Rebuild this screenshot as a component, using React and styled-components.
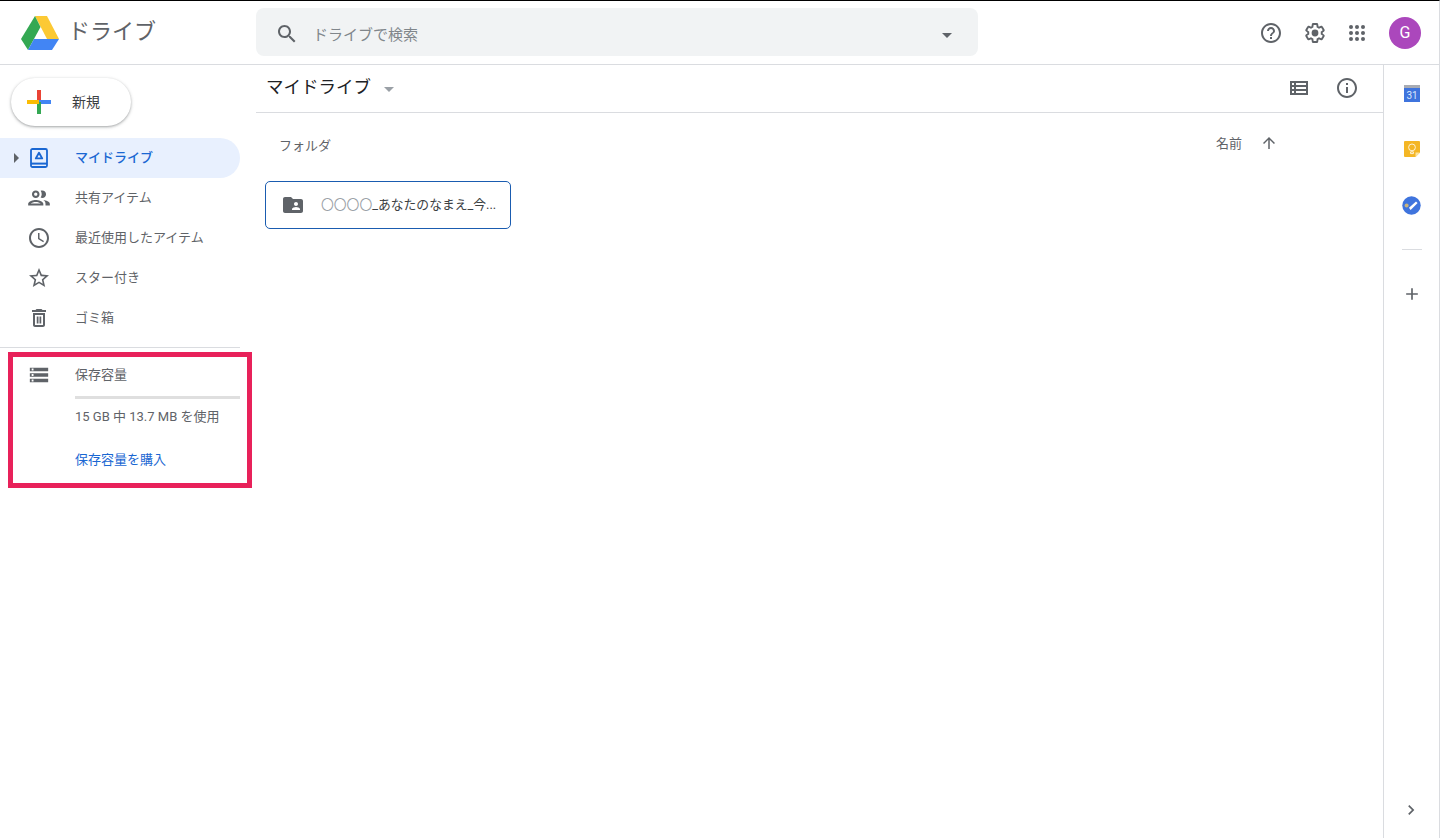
import React from "react";
import styled, { createGlobalStyle } from "styled-components";

const Global = createGlobalStyle`
  html, body { margin: 0; padding: 0; background: #fff; }
  body { font-family: Roboto, "Noto Sans CJK JP", sans-serif; color: #5f6368; }
  * { box-sizing: border-box; }
`;

const Page = styled.div`
  position: relative;
  width: 1440px;
  height: 838px;
  overflow: hidden;
  display: flex;
  flex-direction: column;
  border-top: 1px solid #000;
  border-right: 1px solid #dadce0;
`;

const Header = styled.header`
  height: 64px;
  flex: none;
  display: flex;
  align-items: center;
  border-bottom: 1px solid #dadce0;
`;
const Brand = styled.div`
  width: 256px;
  flex: none;
  display: flex;
  align-items: center;
  gap: 9px;
  padding-left: 21px;
`;
const BrandName = styled.span`
  font-size: 22px;
  color: #5f6368;
  line-height: 32px;
  margin-top: -2px;
`;
const Search = styled.div`
  width: 722px;
  height: 48px;
  margin-bottom: 1px;
  border-radius: 8px;
  background: #f1f3f4;
  display: flex;
  align-items: center;
  padding: 2px 26px 0 19px;
  gap: 14px;
`;
const SearchGlyph = styled.div`
  margin-top: 2px;
`;
const SearchText = styled.span`
  flex: 1;
  font-size: 15px;
  color: #80868b;
`;
const SearchCaret = styled.span`
  width: 0;
  height: 0;
  margin-top: 4px;
  border-top: 5px solid #5f6368;
  border-left: 5px solid transparent;
  border-right: 5px solid transparent;
`;
const HeaderActions = styled.div`
  margin-left: auto;
  display: flex;
  align-items: center;
  padding-right: 18px;
`;
const HeaderButton = styled.div`
  width: ${(p) => p.$w}px;
  display: flex;
  justify-content: center;
  color: #5f6368;
`;
const Avatar = styled.div`
  width: 32px;
  height: 32px;
  margin-left: 12px;
  border-radius: 50%;
  background: #ab47bc;
  color: #fff;
  font-size: 16px;
  font-weight: 400;
  display: flex;
  align-items: center;
  justify-content: center;
`;

const Body = styled.div`
  flex: 1;
  display: flex;
  min-height: 0;
`;

const Sidebar = styled.aside`
  width: 256px;
  flex: none;
  padding-top: 13px;
`;
const NewButton = styled.div`
  width: 120px;
  height: 48px;
  margin-left: 11px;
  border-radius: 24px;
  background: #fff;
  box-shadow: 0 1px 2px rgba(60, 64, 67, 0.3), 0 1px 3px 1px rgba(60, 64, 67, 0.15);
  display: flex;
  align-items: center;
  padding-left: 16px;
  gap: 21px;
  font-size: 14px;
  color: #3c4043;
`;
const NewLabel = styled.span`
  margin-top: -3px;
`;
const Nav = styled.nav`
  margin-top: 12px;
  width: 240px;
  display: flex;
  flex-direction: column;
`;
const NavRow = styled.div`
  position: relative;
  height: 40px;
  display: flex;
  align-items: center;
  border-radius: 0 20px 20px 0;
  background: ${(p) => (p.$active ? "#e8f0fe" : "transparent")};
  color: ${(p) => (p.$active ? "#1a67d2" : "#5f6368")};
  font-weight: ${(p) => (p.$active ? 500 : 400)};
  font-size: 13px;
`;
const NavLabel = styled.span`
  margin-top: -4px;
`;
const NavCaret = styled.span`
  position: absolute;
  left: 14px;
  top: 15px;
  width: 0;
  height: 0;
  border-left: 5px solid #5f6368;
  border-top: 5px solid transparent;
  border-bottom: 5px solid transparent;
`;
const NavIcon = styled.div`
  width: 75px;
  flex: none;
  display: flex;
  justify-content: center;
  padding-left: 3px;
  color: inherit;
`;
const Divider = styled.hr`
  width: 240px;
  height: 1px;
  margin: 9px 0 0;
  border: 0;
  background: #dadce0;
`;
const Storage = styled.section`
  width: 240px;
  padding-top: 16px;
  display: grid;
  grid-template-columns: 75px 1fr;
  font-size: 13px;
  color: #5f6368;
`;
const StorageIcon = styled.div`
  display: flex;
  justify-content: center;
  padding-left: 3px;
  height: 22px;
  align-items: center;
`;
const StorageColumn = styled.div`
  display: flex;
  flex-direction: column;
`;
const StorageTitle = styled.div`
  line-height: 22px;
`;
const StorageBar = styled.div`
  margin-top: 10px;
  height: 3px;
  background: #dfdfdf;
`;
const StorageUse = styled.div`
  margin-top: 9px;
  line-height: 18px;
`;
const StorageLink = styled.div`
  margin-top: 25px;
  line-height: 18px;
  color: #1a67d2;
`;
const Annotation = styled.div`
  position: absolute;
  left: 8px;
  top: 351px;
  width: 244px;
  height: 136px;
  border: 5px solid #e8215a;
  pointer-events: none;
`;

const Main = styled.main`
  flex: 1;
  min-width: 0;
  display: flex;
  flex-direction: column;
`;
const MainBar = styled.div`
  height: 48px;
  flex: none;
  display: flex;
  align-items: center;
  border-bottom: 1px solid #dadce0;
  padding: 0 24px 2px 10px;
`;
const MainTitle = styled.h1`
  margin: -4px 0 0 0;
  font-size: 17.5px;
  font-weight: 400;
  color: #202124;
`;
const TitleCaret = styled.span`
  width: 0;
  height: 0;
  margin: 4px 0 0 13px;
  border-top: 5px solid #9aa0a6;
  border-left: 5px solid transparent;
  border-right: 5px solid transparent;
`;
const MainActions = styled.div`
  margin-left: auto;
  display: flex;
  align-items: center;
  gap: 27px;
  color: #5f6368;
`;
const Content = styled.div`
  flex: 1;
  padding: 0 9px;
`;
const SectionHead = styled.div`
  height: 68px;
  display: flex;
  align-items: center;
  padding: 0 0 5px 14px;
  font-size: 13px;
  color: #5f6368;
`;
const SortGroup = styled.div`
  margin-left: auto;
  margin-right: 96px;
  display: flex;
  align-items: center;
  gap: 18px;
  margin-top: -4px;
`;
const FolderCard = styled.div`
  width: 246px;
  height: 48px;
  border: 1px solid #1a5cb0;
  border-radius: 5px;
  display: flex;
  align-items: center;
  padding-left: 15px;
  gap: 16px;
  color: #5f6368;
`;
const FolderName = styled.span`
  font-size: 12.8px;
  color: #3c4043;
  white-space: nowrap;
  margin-top: -3px;
`;
const FolderMark = styled.span`
  color: #9aa0a6;
`;

const Rail = styled.aside`
  width: 56px;
  flex: none;
  border-left: 1px solid #dadce0;
  display: flex;
  flex-direction: column;
  align-items: center;
  color: #5f6368;
`;
const RailButton = styled.div`
  width: 100%;
  height: 56px;
  flex: none;
  display: flex;
  align-items: center;
  justify-content: center;
  ${(p) => p.$bottom && "margin-top: auto; padding-right: 2px;"}
`;
const RailRule = styled.div`
  width: 20px;
  height: 1px;
  margin: 16px 0 16px;
  background: #dadce0;
`;

const Icon = ({ d, size = 24, children }) => (
  <svg width={size} height={size} viewBox="0 0 24 24" fill="currentColor" style={{ display: "block" }}>
    {d && <path d={d} />}
    {children}
  </svg>
);

const P = {
  search: "M15.5 14h-.79l-.28-.27C15.41 12.59 16 11.11 16 9.5 16 5.91 13.09 3 9.5 3S3 5.91 3 9.5 5.91 16 9.5 16c1.61 0 3.09-.59 4.23-1.57l.27.28v.79l5 4.99L20.49 19l-4.99-5zm-6 0C7.01 14 5 11.99 5 9.5S7.01 5 9.5 5 14 7.01 14 9.5 11.99 14 9.5 14z",
  help: "M11 18h2v-2h-2v2zm1-16C6.48 2 2 6.48 2 12s4.48 10 10 10 10-4.48 10-10S17.52 2 12 2zm0 18c-4.41 0-8-3.59-8-8s3.59-8 8-8 8 3.59 8 8-3.59 8-8 8zm0-14c-2.21 0-4 1.79-4 4h2c0-1.1.9-2 2-2s2 .9 2 2c0 2-3 1.75-3 5h2c0-2.25 3-2.5 3-5 0-2.21-1.79-4-4-4z",
  gear: "M19.43 12.98c.04-.32.07-.64.07-.98s-.03-.66-.07-.98l2.11-1.65c.19-.15.24-.42.12-.64l-2-3.46c-.12-.22-.39-.3-.61-.22l-2.49 1c-.52-.4-1.08-.73-1.69-.98l-.38-2.65C14.46 2.18 14.25 2 14 2h-4c-.25 0-.46.18-.49.42l-.38 2.65c-.61.25-1.17.59-1.69.98l-2.49-1c-.23-.09-.49 0-.61.22l-2 3.46c-.13.22-.07.49.12.64l2.11 1.65c-.04.32-.07.65-.07.98s.03.66.07.98l-2.11 1.65c-.19.15-.24.42-.12.64l2 3.46c.12.22.39.3.61.22l2.49-1c.52.4 1.08.73 1.69.98l.38 2.65c.03.24.24.42.49.42h4c.25 0 .46-.18.49-.42l.38-2.65c.61-.25 1.17-.59 1.69-.98l2.49 1c.23.09.49 0 .61-.22l2-3.46c.12-.22.07-.49-.12-.64l-2.11-1.65z",
  info: "M11 7h2v2h-2zm0 4h2v6h-2zm1-9C6.48 2 2 6.48 2 12s4.48 10 10 10 10-4.48 10-10S17.52 2 12 2zm0 18c-4.41 0-8-3.59-8-8s3.59-8 8-8 8 3.59 8 8-3.59 8-8 8z",
  people: "M9 13.75c-2.34 0-7 1.17-7 3.5V19h14v-1.75c0-2.33-4.66-3.5-7-3.5zM4.34 17c.84-.58 2.87-1.25 4.66-1.25s3.82.67 4.66 1.25H4.34zM9 12c1.93 0 3.5-1.57 3.5-3.5S10.93 5 9 5 5.5 6.57 5.5 8.5 7.07 12 9 12zm0-5c.83 0 1.5.67 1.5 1.5S9.83 10 9 10s-1.5-.67-1.5-1.5S8.17 7 9 7zm7.04 6.81c1.16.84 1.96 1.96 1.96 3.44V19h4v-1.75c0-2.02-3.5-3.17-5.96-3.44zM15 12c1.93 0 3.5-1.57 3.5-3.5S16.93 5 15 5c-.54 0-1.04.13-1.5.35.63.89 1 1.98 1 3.15s-.37 2.26-1 3.15c.46.22.96.35 1.5.35z",
  clock: "M11.99 2C6.47 2 2 6.48 2 12s4.47 10 9.99 10C17.52 22 22 17.52 22 12S17.52 2 11.99 2zM12 20c-4.42 0-8-3.58-8-8s3.58-8 8-8 8 3.58 8 8-3.58 8-8 8zm.5-13H11v6l5.25 3.15.75-1.23-4.5-2.67z",
  star: "M22 9.24l-7.19-.62L12 2 9.19 8.63 2 9.24l5.46 4.73L5.82 21 12 17.27 18.18 21l-1.63-7.03L22 9.24zM12 15.4l-3.76 2.27 1-4.28-3.32-2.88 4.38-.38L12 6.1l1.71 4.04 4.38.38-3.32 2.88 1 4.28L12 15.4z",
  trash: "M6 19c0 1.1.9 2 2 2h8c1.1 0 2-.9 2-2V7H6v12zM8 9h8v10H8V9zm7.5-5l-1-1h-5l-1 1H5v2h14V4zM9.75 10.5h1.75v7H9.75zm2.75 0h1.75v7H12.5z",
  storage: "M2 20h20v-4H2v4zm2-3h2v2H4v-2zM2 4v4h20V4H2zm4 3H4V5h2v2zm-4 7h20v-4H2v4zm2-3h2v2H4v-2z",
  up: "M4 12l1.41 1.41L11 7.83V20h2V7.83l5.58 5.59L20 12l-8-8-8 8z",
  plus: "M19 13h-6v6h-2v-6H5v-2h6V5h2v6h6v2z",
  chevron: "M10 6L8.59 7.41 13.17 12l-4.58 4.59L10 18l6-6z",
  folder: "M20 6h-8l-2-2H4c-1.1 0-1.99.9-1.99 2L2 18c0 1.1.9 2 2 2h16c1.1 0 2-.9 2-2V8c0-1.1-.9-2-2-2zm-5 3c1.1 0 2 .9 2 2s-.9 2-2 2-2-.9-2-2 .9-2 2-2zm4 8h-8v-1c0-1.33 2.67-2 4-2s4 .67 4 2v1z",
};

const DriveLogo = () => (
  <svg width="38" height="34" viewBox="0 0 38 34" style={{ display: "block" }}>
    <polygon points="14,0 26,0 38,23 26,23" fill="#fcc934" />
    <polygon points="14,0 0,23 7,34 19.5,11" fill="#34a853" />
    <polygon points="7,34 31,34 38,23 13,23" fill="#4285f4" />
  </svg>
);

const ColorPlus = () => (
  <svg width="24" height="24" viewBox="0 0 24 24" style={{ display: "block" }}>
    <rect x="10" y="0" width="4" height="12" fill="#ea4335" />
    <rect x="12" y="10" width="12" height="4" fill="#4285f4" />
    <rect x="10" y="12" width="4" height="12" fill="#34a853" />
    <rect x="0" y="10" width="12" height="4" fill="#fbbc04" />
  </svg>
);

const MyDriveIcon = () => (
  <svg width="18" height="20" viewBox="0 0 18 20" style={{ display: "block" }}>
    <rect x="1" y="1" width="16" height="18" rx="1.5" fill="none" stroke="currentColor" strokeWidth="1.8" />
    <path d="M1 15.6h16" stroke="currentColor" strokeWidth="2" />
    <path d="M9 4.8l3.2 5.6H5.8z" fill="none" stroke="currentColor" strokeWidth="1.9" strokeLinejoin="round" />
  </svg>
);

const ListIcon = () => (
  <svg width="18" height="14" viewBox="0 0 18 14" style={{ display: "block" }}>
    <path
      fillRule="evenodd"
      fill="currentColor"
      d="M0 0h18v14H0zM2 2v2h2V2zm4 0v2h10V2zM2 6v2h2V6zm4 0v2h10V6zM2 10v2h2v-2zm4 0v2h10v-2z"
    />
  </svg>
);

const GearIcon = () => (
  <svg width="24" height="24" viewBox="0 0 24 24" style={{ display: "block" }}>
    <g transform="translate(12 12) scale(.9) translate(-12 -12)">
      <path d={P.gear} fill="none" stroke="currentColor" strokeWidth="2.1" />
    </g>
    <circle cx="12" cy="12" r="3.4" fill="currentColor" />
  </svg>
);

const AppsIcon = () => (
  <Icon>
    {[6, 12, 18].flatMap((y) =>
      [6, 12, 18].map((x) => <circle key={`${x}-${y}`} cx={x} cy={y} r="2" />)
    )}
  </Icon>
);

const CalendarIcon = () => (
  <svg width="16" height="17" viewBox="0 0 16 17" style={{ display: "block" }}>
    <rect x="0" y="0" width="16" height="5" fill="#a8abb3" />
    <rect x="0" y="3" width="16" height="14" fill="#3f74dd" />
    <text x="8" y="14" fontSize="10" fontFamily="Roboto, sans-serif" textAnchor="middle" fill="#dce7fb">31</text>
  </svg>
);

const KeepIcon = () => (
  <svg width="16" height="16" viewBox="0 0 16 16" style={{ display: "block" }}>
    <path d="M1 0h14a1 1 0 0 1 1 1v10.5L11.5 16H1a1 1 0 0 1-1-1V1a1 1 0 0 1 1-1z" fill="#f4b625" />
    <path d="M16 11.5L11.5 16v-4.5z" fill="#fbe3a0" />
    <circle cx="8" cy="6.4" r="3.4" fill="none" stroke="#fff" strokeWidth=".8" />
    <path d="M6.6 10.8h2.8v1.8H6.6z" fill="none" stroke="#fff" strokeWidth=".8" />
  </svg>
);

const TasksIcon = () => (
  <svg width="19" height="19" viewBox="0 0 19 19" style={{ display: "block" }}>
    <circle cx="9.5" cy="9.5" r="9.2" fill="#3f74dd" />
    <circle cx="4.6" cy="9.6" r="2" fill="#c7b37e" />
    <path d="M7 11.8l7-6.4 1.6 1.6-7 7z" fill="#fff" />
  </svg>
);

const navItems = [
  { label: "共有アイテム", d: P.people, size: 26 },
  { label: "最近使用したアイテム", d: P.clock, size: 24 },
  { label: "スター付き", d: P.star, size: 24 },
  { label: "ゴミ箱", d: P.trash, size: 24 },
];

export default function App() {
  return (
    <>
      <Global />
      <Page>
        <Header>
          <Brand>
            <DriveLogo />
            <BrandName>ドライブ</BrandName>
          </Brand>
          <Search>
            <SearchGlyph><Icon d={P.search} /></SearchGlyph>
            <SearchText>ドライブで検索</SearchText>
            <SearchCaret />
          </Search>
          <HeaderActions>
            <HeaderButton $w={44}><Icon d={P.help} /></HeaderButton>
            <HeaderButton $w={44}><GearIcon /></HeaderButton>
            <HeaderButton $w={40}><AppsIcon /></HeaderButton>
            <Avatar>G</Avatar>
          </HeaderActions>
        </Header>
        <Body>
          <Sidebar>
            <NewButton>
              <ColorPlus />
              <NewLabel>新規</NewLabel>
            </NewButton>
            <Nav>
              <NavRow $active>
                <NavCaret />
                <NavIcon><MyDriveIcon /></NavIcon>
                <NavLabel>マイドライブ</NavLabel>
              </NavRow>
              {navItems.map((item) => (
                <NavRow key={item.label}>
                  <NavIcon><Icon d={item.d} size={item.size} /></NavIcon>
                  <NavLabel>{item.label}</NavLabel>
                </NavRow>
              ))}
            </Nav>
            <Divider />
            <Storage>
              <StorageIcon><Icon d={P.storage} size={22} /></StorageIcon>
              <StorageColumn>
                <StorageTitle>保存容量</StorageTitle>
                <StorageBar />
                <StorageUse>15 GB 中 13.7 MB を使用</StorageUse>
                <StorageLink>保存容量を購入</StorageLink>
              </StorageColumn>
            </Storage>
          </Sidebar>
          <Main>
            <MainBar>
              <MainTitle>マイドライブ</MainTitle>
              <TitleCaret />
              <MainActions>
                <ListIcon />
                <Icon d={P.info} />
              </MainActions>
            </MainBar>
            <Content>
              <SectionHead>
                フォルダ
                <SortGroup>
                  名前
                  <Icon d={P.up} size={18} />
                </SortGroup>
              </SectionHead>
              <FolderCard>
                <Icon d={P.folder} />
                <FolderName><FolderMark>〇〇〇〇</FolderMark>_あなたのなまえ_今...</FolderName>
              </FolderCard>
            </Content>
          </Main>
          <Rail>
            <RailButton><CalendarIcon /></RailButton>
            <RailButton><KeepIcon /></RailButton>
            <RailButton><TasksIcon /></RailButton>
            <RailRule />
            <RailButton><Icon d={P.plus} size={20} /></RailButton>
            <RailButton $bottom><Icon d={P.chevron} size={20} /></RailButton>
          </Rail>
        </Body>
        <Annotation />
      </Page>
    </>
  );
}
